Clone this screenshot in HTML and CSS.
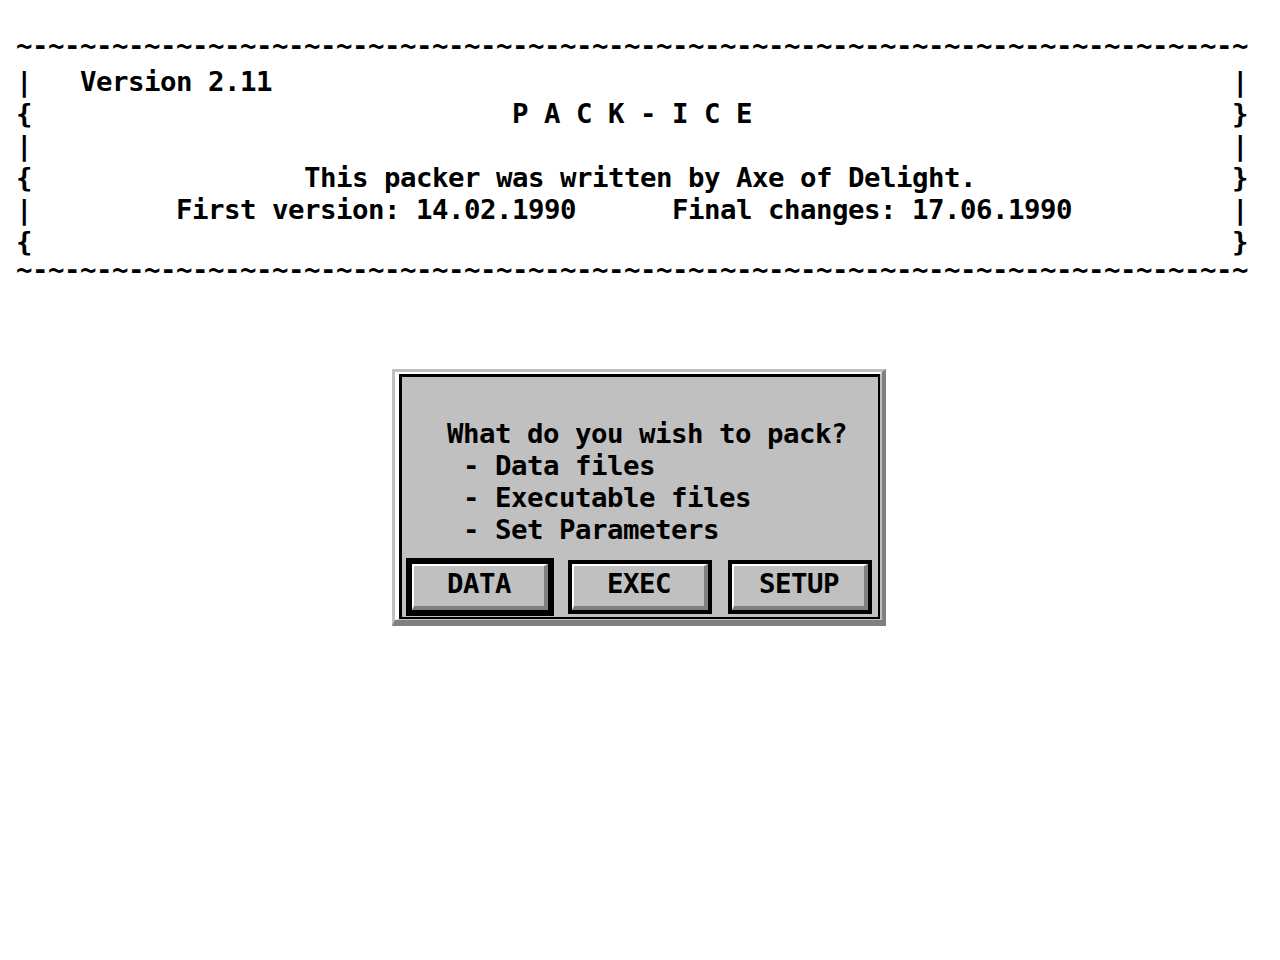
FILE: index.html
```html
<!DOCTYPE html>
<html>
<head>
<meta charset="utf-8">
<title>PACK-ICE</title>
<link rel="stylesheet" href="styles.css">
</head>
<body>
<div class="screen">
  <div class="banner">
    <div class="row tilde-row">~-~-~-~-~-~-~-~-~-~-~-~-~-~-~-~-~-~-~-~-~-~-~-~-~-~-~-~-~-~-~-~-~-~-~-~-~-~-~</div>
    <div class="row frame-row"><span class="edge">|</span><span class="mid">   Version 2.11</span><span class="edge">|</span></div>
    <div class="row frame-row"><span class="edge">{</span><span class="mid">                              P A C K - I C E</span><span class="edge">}</span></div>
    <div class="row frame-row"><span class="edge">|</span><span class="mid"></span><span class="edge">|</span></div>
    <div class="row frame-row"><span class="edge">{</span><span class="mid">                 This packer was written by Axe of Delight.</span><span class="edge">}</span></div>
    <div class="row frame-row"><span class="edge">|</span><span class="mid">         First version: 14.02.1990      Final changes: 17.06.1990</span><span class="edge">|</span></div>
    <div class="row frame-row"><span class="edge">{</span><span class="mid"></span><span class="edge">}</span></div>
    <div class="row tilde-row">~-~-~-~-~-~-~-~-~-~-~-~-~-~-~-~-~-~-~-~-~-~-~-~-~-~-~-~-~-~-~-~-~-~-~-~-~-~-~</div>
  </div>

  <div class="dialog">
    <div class="dialog-mid">
      <div class="dialog-in">
        <div class="prompt">
          <div class="row">What do you wish to pack?</div>
          <div class="row"> - Data files</div>
          <div class="row"> - Executable files</div>
          <div class="row"> - Set Parameters</div>
        </div>
        <div class="buttons">
          <div class="btn btn-default"><div class="face"><span class="label">DATA</span></div></div>
          <div class="btn"><div class="face"><span class="label">EXEC</span></div></div>
          <div class="btn"><div class="face"><span class="label">SETUP</span></div></div>
        </div>
      </div>
    </div>
  </div>
</div>
</body>
</html>
```

FILE: styles.css
```css
html, body {
  margin: 0;
  padding: 0;
  background: #ffffff;
}

body {
  font-family: "DejaVu Sans Mono", "Liberation Mono", monospace;
  font-weight: bold;
  font-size: 27.4px;
  letter-spacing: -0.49px;
  color: #000000;
}

.screen {
  width: 1280px;
  height: 960px;
  padding-top: 32px;
  box-sizing: border-box;
  overflow: hidden;
}

.row {
  height: 32px;
  box-sizing: border-box;
  padding-top: 3px;
  line-height: 29px;
  white-space: pre;
}

.banner {
  margin-left: 16px;
  width: 1232px;
}

.tilde-row {
  padding-top: 0;
  line-height: 28px;
}

.frame-row {
  display: flex;
}

.edge {
  width: 16px;
  flex: 0 0 16px;
}

.mid {
  flex: 1 1 auto;
  white-space: pre;
}

/* Dialog */
.dialog {
  width: 494px;
  margin: 81px 0 0 392px;
  box-sizing: border-box;
  border-left: 3px solid #c0c0c0;
  border-top: 3px solid #c0c0c0;
  border-right: 4px solid #808080;
  border-bottom: 6px solid #808080;
}

.dialog-mid {
  border-left: 4px solid #ffffff;
  border-top: 2px solid #ffffff;
  border-right: 2px solid #c0c0c0;
  border-bottom: 1px solid #c0c0c0;
}

.dialog-in {
  background: #c0c0c0;
  border-left: 3px solid #000000;
  border-top: 3px solid #000000;
  border-right: 2px solid #000000;
  border-bottom: 2px solid #000000;
  padding: 39px 0 3px 0;
}

.prompt {
  padding-left: 45px;
}

.buttons {
  display: flex;
  gap: 16px;
  padding-left: 6px;
  margin-top: 16px;
}

.btn {
  width: 144px;
  height: 54px;
  box-sizing: border-box;
  border: 4px solid #000000;
  background: #c0c0c0;
}

.btn-default {
  outline: 2px solid #000000;
}

.face {
  height: 100%;
  box-sizing: border-box;
  border-top: 2px solid #ffffff;
  border-left: 2px solid #ffffff;
  border-right: 4px solid #808080;
  border-bottom: 4px solid #808080;
  text-align: center;
}

.label {
  display: block;
  height: 32px;
  box-sizing: border-box;
  padding-top: 3px;
  line-height: 29px;
}
```
